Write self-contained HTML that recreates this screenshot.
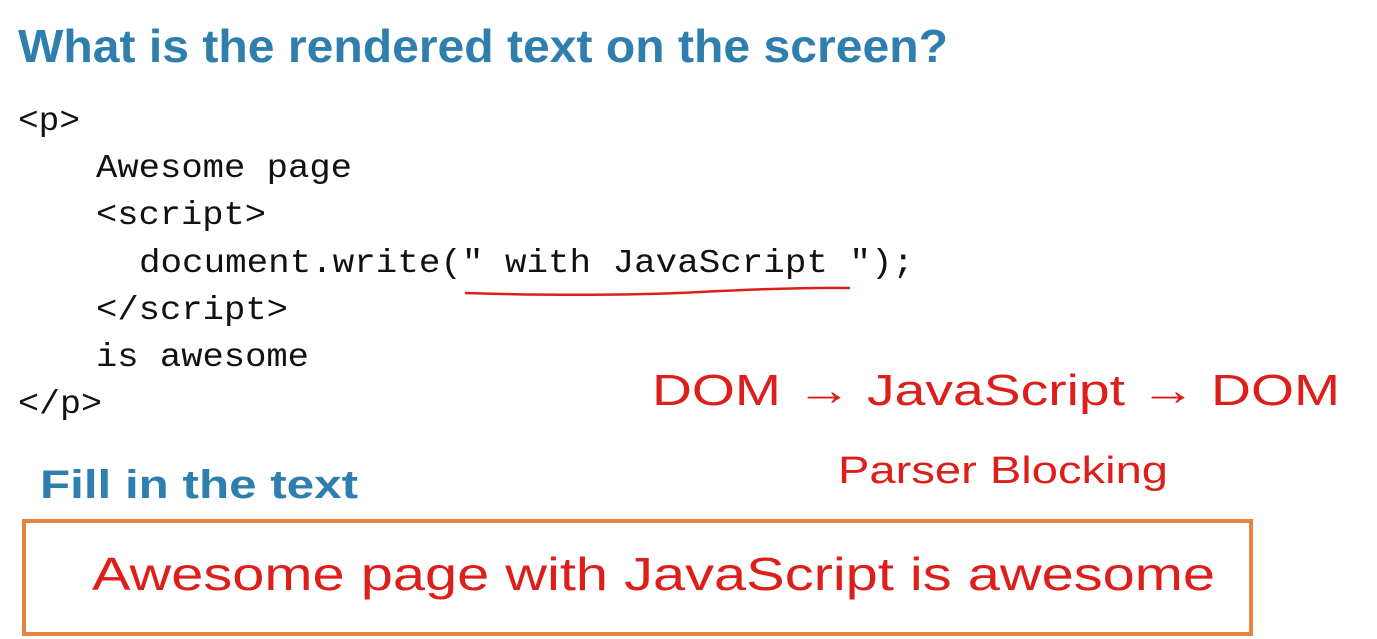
<!DOCTYPE html>
<html><head><meta charset="utf-8"><style>
html,body{margin:0;padding:0;background:#fff;width:1377px;height:639px;overflow:hidden}
svg{display:block}
.h{font-family:"Liberation Sans",sans-serif;font-weight:bold;fill:#2f7fae}
.c{font-family:"Liberation Mono",monospace;fill:#111;font-size:33px}
.r{font-family:"Liberation Sans",sans-serif;fill:#dc1f1a;font-weight:normal}
</style></head><body>
<svg width="1377" height="639" viewBox="0 0 1377 639" xmlns="http://www.w3.org/2000/svg">
<text class="h" x="18" y="62" font-size="46" textLength="930" lengthAdjust="spacingAndGlyphs">What is the rendered text on the screen?</text>
<text class="c" x="18" y="130" textLength="62" lengthAdjust="spacingAndGlyphs">&lt;p&gt;</text>
<text class="c" x="96" y="177" textLength="256" lengthAdjust="spacingAndGlyphs">Awesome page</text>
<text class="c" x="96" y="224" textLength="170" lengthAdjust="spacingAndGlyphs">&lt;script&gt;</text>
<text class="c" x="139" y="272" textLength="775" lengthAdjust="spacingAndGlyphs">document.write(" with JavaScript ");</text>
<text class="c" x="96" y="319" textLength="192" lengthAdjust="spacingAndGlyphs">&lt;/script&gt;</text>
<text class="c" x="96" y="366" textLength="213" lengthAdjust="spacingAndGlyphs">is awesome</text>
<text class="c" x="18" y="413" textLength="84" lengthAdjust="spacingAndGlyphs">&lt;/p&gt;</text>
<path d="M465 293 Q600 297 700 292 T850 288" stroke="#dc1f1a" stroke-width="2.5" fill="none"/>
<text class="h" x="40" y="498" font-size="40" textLength="318" lengthAdjust="spacingAndGlyphs">Fill in the text</text>
<text class="r" x="652" y="405" font-size="44" textLength="688" lengthAdjust="spacingAndGlyphs">DOM → JavaScript → DOM</text>
<text class="r" x="838" y="483" font-size="38" textLength="330" lengthAdjust="spacingAndGlyphs">Parser Blocking</text>
<rect x="24" y="521" width="1227" height="113" fill="none" stroke="#e8843f" stroke-width="4"/>
<text class="r" x="92" y="590" font-size="46" textLength="1123" lengthAdjust="spacingAndGlyphs">Awesome page with JavaScript is awesome</text>
</svg>
</body></html>
